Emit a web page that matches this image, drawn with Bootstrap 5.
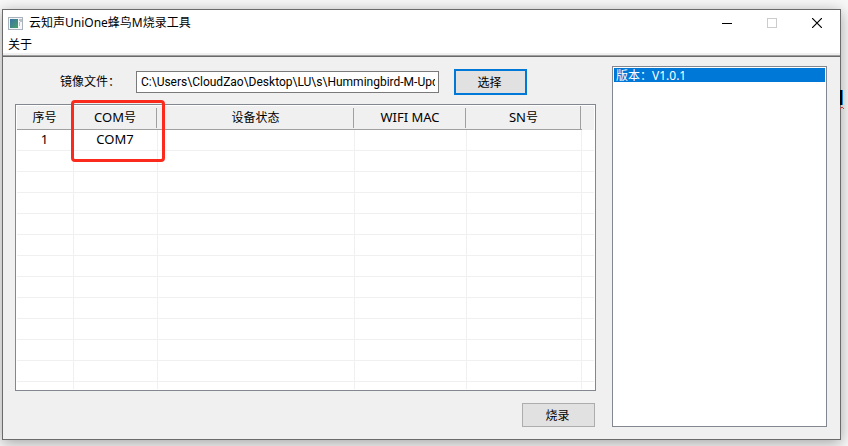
<!DOCTYPE html>
<html lang="zh-CN">
<head>
<meta charset="utf-8">
<meta name="viewport" content="width=device-width, initial-scale=1">
<title>云知声UniOne蜂鸟M烧录工具</title>
<link href="https://cdn.jsdelivr.net/npm/bootstrap@5.3.0/dist/css/bootstrap.min.css" rel="stylesheet">
<style>
  body { background: #f8f8f8; color: #000; font: 12px/16px "Noto Sans", "Noto Sans CJK SC", sans-serif; padding: 9px 7px 6px 2px; }
  .app-window { background: #f0f0f0; border: 1px solid #6b6b6b; box-shadow: 0 3px 14px rgba(0,0,0,.35); }
  .title-bar { height: 26px; padding: 0 1px 0 5px; }
  .app-icon { width: 15px; height: 13px; margin-right: 6px; }
  .win-btn { width: 45px; height: 25px; background: none; }
  .menu-strip { height: 17px; padding: 1px 0 0 5px; }
  .menu-strip a { color: #000; }
  .menu-edge { height: 4px; background: #f0f0f0; border-bottom: 1px solid #696969; box-shadow: inset 0 -1px #a0a0a0; }
  .work-area { padding: 9px 13px 12px 12px; gap: 16px; }
  .file-row { height: 38px; padding: 3px 0 9px 45px; }
  .file-row label { width: 76px; }
  .path-box { width: 303px; height: 22px; padding: 0 3px 1px 4px; border: 1px solid #7a7a7a; background: #fff; color: #000; font: 12px/16px Roboto, "Noto Sans CJK SC", sans-serif; outline: 0; }
  .push { width: 73px; height: 24px; padding: 2px 2px 0 0; border: 1px solid #adadad; border-radius: 0; background: #e1e1e1; color: #000; font: inherit; }
  .push-default { height: 26px; margin-left: 15px; border: 2px solid #0078d7; }
  .action-row { padding: 12px 1px 0 0; }
  .grid-frame { border: 1px solid #828790; padding: 1px; background: #fff; }
  .device-grid { height: 100%; table-layout: fixed; border-collapse: separate; border-spacing: 0; text-align: center; font-size: 12px; }
  .device-grid th { height: 24px; padding: 0 2px 0 0; font-weight: 400; text-align: center; border-bottom: 1px solid #a0a0a0; background: linear-gradient(#a0a0a0, #a0a0a0) calc(100% - 1px) 2px / 1px 20px no-repeat #f0f0f0; }
  .device-grid th:nth-child(5) { background-position: calc(100% - 1px) 0; background-size: 1px 24px; }
  .device-grid th:last-child { background: #f0f0f0; border-bottom-color: #f0f0f0; }
  .device-grid td { height: 21px; padding: 0 1px 0 0; border-right: 1px solid #f0f0f0; border-bottom: 1px solid #f0f0f0; }
  .device-grid .latin { font-size: 13px; line-height: 14px; }
  .device-grid td:last-child { border-right: 0; }
  .device-grid .rest td { height: auto; border-bottom: 0; }
  .c-no { width: 57px; } .c-com { width: 84px; } .c-mac { width: 112px; } .c-sn { width: 115px; } .c-end { width: 12px; }
  .highlight-box { left: 55px; top: -5px; width: 94px; height: 62px; border: 3px solid #fa2a1d; border-radius: 4px; }
  .log-list { flex: 0 0 215px; border: 1px solid #828790; padding: 1px; background: #fff; }
  .log-item { height: 14px; padding: 1px 0 0 2px; line-height: 14px; background: #0078d7; color: #fff; }
  .peek { right: 3px; top: 90px; width: 5px; height: 20px; }
</style>
<script src="https://cdn.jsdelivr.net/npm/bootstrap@5.3.0/dist/js/bootstrap.bundle.min.js"></script>
</head>
<body class="vh-100 d-flex overflow-hidden position-relative">
<main class="app-window d-flex flex-column flex-grow-1">
  <header class="bg-white">
    <div class="title-bar d-flex align-items-center">
      <svg class="app-icon" viewBox="0 0 15 13" aria-hidden="true">
        <defs><linearGradient id="pane" x1="0" y1="0" x2="1" y2="1"><stop offset="0" stop-color="#3973a5"/><stop offset="1" stop-color="#4aa06a"/></linearGradient></defs>
        <rect x=".5" y=".5" width="14" height="12" fill="#f4f6f8" stroke="#a9b2bc"/>
        <rect x="2" y="2" width="8" height="9" fill="url(#pane)"/>
        <path d="M11 3h1M13 2v3M11 6h1M11 8h1" stroke="#7d8b99"/>
      </svg>
      <span class="flex-grow-1">云知声UniOne蜂鸟M烧录工具</span>
      <button class="win-btn border-0 p-0 d-flex align-items-center justify-content-center" aria-label="最小化"><svg width="10" height="10"><path d="M0 5.5h10" stroke="#000"/></svg></button>
      <button class="win-btn border-0 p-0 d-flex align-items-center justify-content-center" aria-label="最大化" disabled><svg width="10" height="10"><rect x=".5" y=".5" width="9" height="9" fill="none" stroke="#ccc"/></svg></button>
      <button class="win-btn border-0 p-0 d-flex align-items-center justify-content-center" aria-label="关闭"><svg width="10" height="10"><path d="M0 0l10 10M10 0L0 10" stroke="#000" stroke-width="1.2"/></svg></button>
    </div>
    <nav class="menu-strip"><a href="#" class="text-decoration-none">关于</a></nav>
    <div class="menu-edge"></div>
  </header>
  <div class="work-area d-flex flex-grow-1">
    <section class="d-flex flex-column flex-grow-1">
      <div class="file-row d-flex align-items-center">
        <label for="image-path">镜像文件：</label>
        <input id="image-path" class="path-box" type="text" value="C:\Users\CloudZao\Desktop\LU\s\Hummingbird-M-Update">
        <button class="push push-default">选择</button>
      </div>
      <div class="grid-frame flex-grow-1 position-relative">
        <table class="device-grid w-100">
          <colgroup><col class="c-no"><col class="c-com"><col><col class="c-mac"><col class="c-sn"><col class="c-end"></colgroup>
          <thead><tr><th>序号</th><th><span class="latin">COM</span>号</th><th>设备状态</th><th><span class="latin">WIFI MAC</span></th><th><span class="latin">SN</span>号</th><th></th></tr></thead>
          <tbody>
            <tr><td><span class="latin">1</span></td><td><span class="latin">COM7</span></td><td></td><td></td><td></td><td></td></tr>
            <tr><td></td><td></td><td></td><td></td><td></td><td></td></tr>
            <tr><td></td><td></td><td></td><td></td><td></td><td></td></tr>
            <tr><td></td><td></td><td></td><td></td><td></td><td></td></tr>
            <tr><td></td><td></td><td></td><td></td><td></td><td></td></tr>
            <tr><td></td><td></td><td></td><td></td><td></td><td></td></tr>
            <tr><td></td><td></td><td></td><td></td><td></td><td></td></tr>
            <tr><td></td><td></td><td></td><td></td><td></td><td></td></tr>
            <tr><td></td><td></td><td></td><td></td><td></td><td></td></tr>
            <tr><td></td><td></td><td></td><td></td><td></td><td></td></tr>
            <tr><td></td><td></td><td></td><td></td><td></td><td></td></tr>
            <tr><td></td><td></td><td></td><td></td><td></td><td></td></tr>
            <tr class="rest"><td></td><td></td><td></td><td></td><td></td><td></td></tr>
          </tbody>
        </table>
        <div class="highlight-box position-absolute"></div>
      </div>
      <div class="action-row d-flex justify-content-end"><button class="push">烧录</button></div>
    </section>
    <aside class="log-list"><div class="log-item">版本：V1.0.1</div></aside>
  </div>
</main>
<svg class="peek position-absolute" viewBox="0 0 5 20" aria-hidden="true"><path d="M1 0v15" stroke="#000" stroke-width="2"/><path d="M2.5 0v15" stroke="#1f7fd0"/><path d="M0 19l2-2 2 2" fill="none" stroke="#d33"/></svg>
</body>
</html>
